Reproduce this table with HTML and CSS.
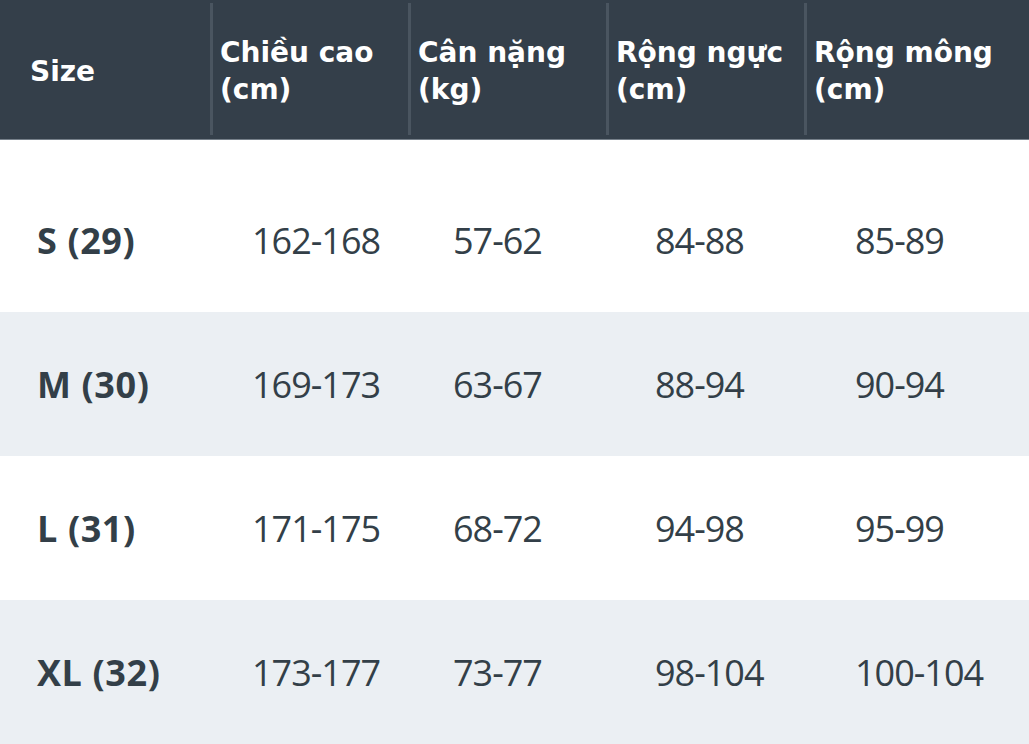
FILE: index.html
```html
<!DOCTYPE html>
<html lang="vi">
<head>
<meta charset="utf-8">
<title>Bảng size</title>
<link rel="stylesheet" href="styles.css">
</head>
<body>
<div class="size-table">
  <div class="thead">
    <div class="th th-first"><div class="th-inner">Size</div></div>
    <div class="th"><div class="th-inner">Chiều cao<br>(cm)</div></div>
    <div class="th"><div class="th-inner">Cân nặng<br>(kg)</div></div>
    <div class="th"><div class="th-inner">Rộng ngực<br>(cm)</div></div>
    <div class="th"><div class="th-inner">Rộng mông<br>(cm)</div></div>
  </div>
  <div class="tbody">
    <div class="row">
      <div class="td td-size">S (29)</div>
      <div class="td">162-168</div>
      <div class="td">57-62</div>
      <div class="td">84-88</div>
      <div class="td">85-89</div>
    </div>
    <div class="row row-alt">
      <div class="td td-size">M (30)</div>
      <div class="td">169-173</div>
      <div class="td">63-67</div>
      <div class="td">88-94</div>
      <div class="td">90-94</div>
    </div>
    <div class="row">
      <div class="td td-size">L (31)</div>
      <div class="td">171-175</div>
      <div class="td">68-72</div>
      <div class="td">94-98</div>
      <div class="td">95-99</div>
    </div>
    <div class="row row-alt">
      <div class="td td-size">XL (32)</div>
      <div class="td">173-177</div>
      <div class="td">73-77</div>
      <div class="td">98-104</div>
      <div class="td">100-104</div>
    </div>
  </div>
</div>
</body>
</html>
```

FILE: styles.css
```css
* { box-sizing: border-box; }
html, body {
  margin: 0;
  padding: 0;
  background: #ffffff;
}
body {
  font-family: "DejaVu Sans", "Open Sans", sans-serif;
  color: #333f48;
  width: 1029px;
  height: 744px;
  overflow: hidden;
}
.thead {
  display: grid;
  grid-template-columns: 210px 198px 198px 198px 1fr;
  height: 140px;
  background: #343f4a;
  border-bottom: 1px solid #76808a;
}
.th {
  padding: 3px 0 4px;
  color: #ffffff;
  font-weight: 700;
  font-size: 28px;
  line-height: 37px;
}
.th-inner {
  height: 100%;
  border-left: 3px solid #4a5560;
  padding-left: 7px;
  padding-top: 4px;
  display: flex;
  align-items: center;
}
.th-first .th-inner {
  border-left: none;
  padding-left: 30px;
}
.tbody {
  padding-top: 28px;
}
.row {
  display: grid;
  grid-template-columns: 215px 201px 202px 200px 1fr;
  height: 144px;
  align-items: center;
}
.row-alt {
  background: #ebeff3;
}
.td {
  padding-left: 37px;
  font-family: "Open Sans", "DejaVu Sans", sans-serif;
  font-size: 36px;
  letter-spacing: -1px;
  white-space: nowrap;
}
.td-size {
  font-weight: 700;
  font-size: 36px;
  letter-spacing: 0.6px;
}
```
